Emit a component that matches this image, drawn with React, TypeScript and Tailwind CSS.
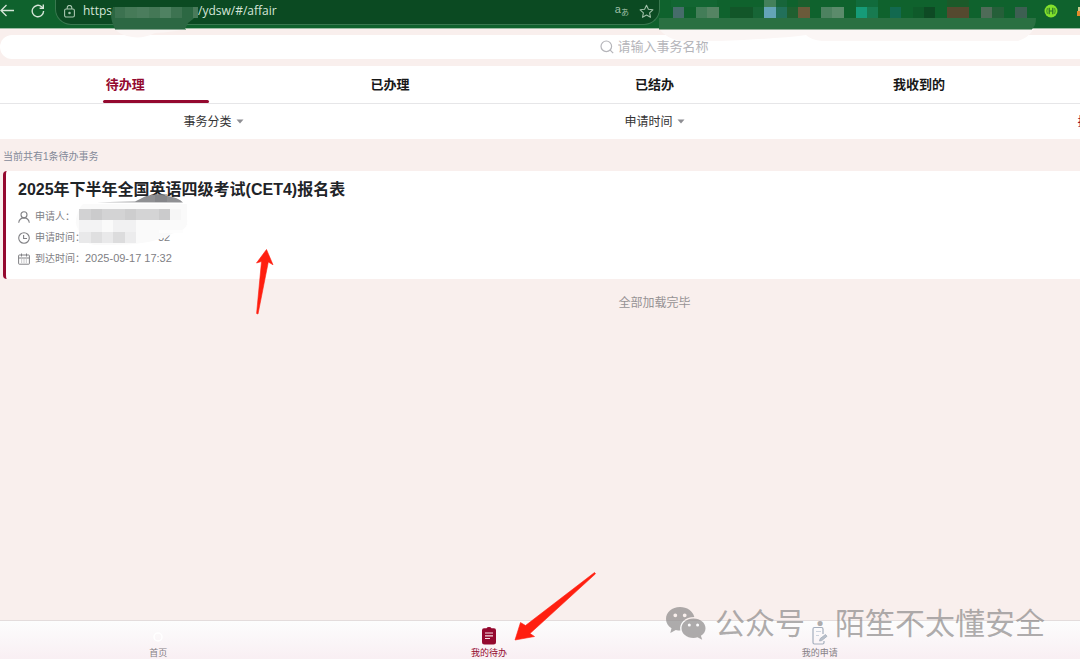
import React from "react";

type Cell = [x: number, y: number, w: number, h: number, fill: string];

const extensionCells: Cell[] = [
  [671, 0, 46, 7, "#126632"],
  [730, 7, 23, 11, "#125629"],
  [764, 0, 12, 7, "#43805a"],
  [776, 0, 11, 7, "#17653a"],
  [673, 7, 11, 11, "#466c6a"],
  [696, 7, 11, 11, "#437d58"],
  [707, 7, 12, 11, "#558463"],
  [753, 7, 11, 11, "#176536"],
  [764, 7, 12, 11, "#64a4b7"],
  [776, 7, 11, 11, "#22705a"],
  [787, 7, 11, 11, "#1f6030"],
  [798, 7, 12, 11, "#6b5a3a"],
  [798, 0, 12, 7, "#1b5f2d"],
  [821, 7, 11, 11, "#4d8260"],
  [832, 7, 12, 11, "#5b8b6b"],
  [856, 7, 11, 11, "#169b78"],
  [856, 0, 22, 7, "#116b3c"],
  [867, 7, 11, 11, "#187a50"],
  [890, 7, 11, 11, "#12694f"],
  [913, 7, 11, 11, "#0f5a2a"],
  [924, 7, 11, 11, "#0e4a24"],
  [947, 7, 22, 11, "#55492f"],
  [947, 0, 22, 7, "#1b5a29"],
  [981, 7, 11, 11, "#4f6b58"],
  [992, 7, 12, 11, "#255f39"],
  [1015, 7, 12, 11, "#3d5f52"],
];

const hostCells: Cell[] = [
  [4, 7, 10, 11, "#3c7250"],
  [14, 7, 12, 11, "#467a58"],
  [26, 7, 12, 11, "#4b7d5d"],
  [38, 7, 11, 11, "#447856"],
  [49, 7, 11, 11, "#4f8262"],
  [60, 7, 11, 11, "#3d7351"],
  [71, 7, 11, 11, "#2c6843"],
  [82, 7, 5, 11, "#4a7b5b"],
];

const nameCells: Cell[] = [
  [6, 15, 12, 11, "#d2d2d3"],
  [18, 15, 11, 11, "#cbcbcc"],
  [29, 15, 23, 11, "#d3d3d4"],
  [52, 15, 11, 11, "#cdcdce"],
  [63, 15, 23, 11, "#d4d4d5"],
  [86, 15, 11, 11, "#cbcbcc"],
  [97, 15, 11, 11, "#f6f6f6"],
  [6, 26, 23, 12, "#f3f3f4"],
  [40, 26, 23, 12, "#f1f1f2"],
  [6, 38, 12, 11, "#e9e9ea"],
  [18, 38, 11, 11, "#dfdfe0"],
  [29, 38, 11, 11, "#e9e9ea"],
  [40, 38, 12, 11, "#dcdcdd"],
  [52, 38, 11, 11, "#ececed"],
];

function Cells({ cells }: { cells: Cell[] }) {
  return (
    <g shapeRendering="crispEdges">
      {cells.map(([x, y, w, h, fill]) => (
        <rect key={`${x}-${y}`} x={x} y={y} width={w} height={h} fill={fill} />
      ))}
    </g>
  );
}

function BrowserBar() {
  return (
    <header className="relative z-10 flex h-[29px] shrink-0 items-start border-b border-[#9dbda5] bg-[#0f622d] text-[#d5e5d8]">
      <button type="button" aria-label="Back" className="flex h-[22px] w-5 items-center">
        <svg width="15" height="14" viewBox="0 0 15 14" fill="none" stroke="currentColor" strokeWidth="1.3">
          <path d="M14 6.5H1M6.5 1 1 6.5 6.5 12" />
        </svg>
      </button>
      <button type="button" aria-label="Reload" className="ml-2 flex h-[22px] w-5 items-center justify-center">
        <svg width="14" height="14" viewBox="0 0 14 14" fill="none" stroke="currentColor" strokeWidth="1.4">
          <path d="M12.6 7A5.7 5.7 0 1 1 10.6 2.7L12.2 4.2" />
          <path d="M12.3.6v3.7H8.6" />
        </svg>
      </button>
      <div className="ml-[7px] flex h-[25px] w-[56%] items-start rounded-b-2xl border border-t-0 border-[#39784f] bg-[#0b4a22] pr-1 pl-2">
        <div className="flex h-[22px] flex-1 items-center text-xs leading-5">
          <svg width="11" height="13" viewBox="0 0 11 13" fill="none" stroke="#a9c6b0" strokeWidth="1.1" className="mr-2 shrink-0">
            <rect x=".6" y="4" width="9.8" height="8" rx="1.5" />
            <path d="M3.2 4V2.7a2.3 2.3 0 0 1 4.6 0V4" />
            <circle cx="5.5" cy="8" r=".7" fill="#a9c6b0" />
          </svg>
          <span className="w-[115px]">https</span>
          <span>/ydsw/#/affair</span>
        </div>
        <button
          type="button"
          aria-label="Translate"
          className="flex h-[22px] w-5 items-center font-['Liberation_Sans','Noto_Sans_CJK_JP',sans-serif] text-[#9fc0a7]"
        >
          <span className="pb-1 text-[11px] leading-4">a</span>
          <span className="pt-1 text-[8px] leading-4">あ</span>
        </button>
        <button type="button" aria-label="Favorite" className="ml-1 flex h-[22px] w-4 items-center justify-center">
          <svg width="15" height="15" viewBox="0 0 15 15" fill="none" stroke="#9fc0a7" strokeWidth="1.1" strokeLinejoin="round">
            <path d="m7.5 1.2 1.9 4.1 4.5.5-3.3 3 .9 4.5-4-2.2-4 2.2.9-4.5-3.3-3 4.5-.5z" />
          </svg>
        </button>
      </div>
      <div className="flex h-[22px] flex-1 items-center justify-end">
        <svg width="14" height="14" viewBox="0 0 14 14" className="mr-[19px]">
          <circle cx="7" cy="7" r="6.5" fill="#83e02c" />
          <path d="M5.2 3.7v6.6M8.8 3.7v6.6M5.2 7h3.6" stroke="#23702b" strokeWidth="1.2" fill="none" />
          <path d="M3.4 4.2Q2.2 7 3.4 9.8M10.6 4.2Q11.8 7 10.6 9.8" stroke="#23702b" strokeWidth=".8" fill="none" />
        </svg>
        <svg width="3" height="12" viewBox="0 0 3 12">
          <path d="M1 2h2v4H1z" fill="#c9c98b" />
          <path d="M0 6h3v5H0z" fill="#e38b2c" />
        </svg>
      </div>
      <svg className="pointer-events-none absolute top-0 left-[111px]" width="90" height="40" viewBox="0 0 90 40">
        <path d="M4 29h70q-12 3-30 4-14 7-28 3-8-2-12-7z" fill="#fbf5f4" />
        <path d="M2 7h85q1 9-10 16l-3 6H4q-4-8-4-14z" fill="#2c6843" />
        <Cells cells={hostCells} />
        <path d="M4 29.500h71" stroke="#86a892" />
      </svg>
      <svg className="pointer-events-none absolute top-0 left-0" width="1040" height="42" viewBox="0 0 1040 42">
        <path d="M659 29h375q-6 9-16 12H822q-11-1-16-6-30 4-86 6H680q-14-3-21-12z" fill="#fbf6f5" />
        <path d="M659 18h377q0 8-4 11H659z" fill="#2a7042" />
        <path d="M659 29.500h373" stroke="#92b19a" />
        <Cells cells={extensionCells} />
      </svg>
    </header>
  );
}

const tabs = ["待办理", "已办理", "已结办", "我收到的"];

function Tabs() {
  return (
    <nav className="grid h-[38px] grid-cols-5 border-b border-[#e6e6e8] bg-white">
      {tabs.map((name, i) => (
        <button
          key={name}
          type="button"
          className={
            i === 0
              ? "relative text-[13px] font-bold text-[#94092f]"
              : "relative text-[13px] font-bold text-[#181818]"
          }
        >
          {name}
          {i === 0 && <span className="absolute bottom-0 left-[110px] h-[3px] w-2/5 rounded-full bg-[#94092f]" />}
        </button>
      ))}
    </nav>
  );
}

function Filters() {
  return (
    <div className="grid h-[35px] grid-cols-3 bg-white text-xs text-[#333]">
      {["事务分类", "申请时间", "排序"].map((name, i) => (
        <button
          key={name}
          type="button"
          aria-haspopup="listbox"
          className={i === 2 ? "flex items-center justify-center gap-1 text-[#94092f]" : "flex items-center justify-center gap-1"}
        >
          {name}
          <svg width="8" height="5" viewBox="0 0 8 5">
            <path d="M.5.500h7L4 4.500z" fill="#8e8e93" />
          </svg>
        </button>
      ))}
    </div>
  );
}

function UserIcon() {
  return (
    <svg width="12" height="12" viewBox="0 0 12 12" fill="none" stroke="currentColor" strokeWidth="1.1">
      <circle cx="6" cy="3.700" r="3" />
      <path d="M.7 11.700Q1.300 7 6 6.900q4.700.1 5.300 4.800" />
    </svg>
  );
}

function ClockIcon() {
  return (
    <svg width="12" height="12" viewBox="0 0 12 12" fill="none" stroke="currentColor" strokeWidth="1.1">
      <circle cx="6" cy="6" r="5.300" />
      <path d="M5.600 3v3.500H9" />
    </svg>
  );
}

function CalendarIcon() {
  return (
    <svg width="12" height="12" viewBox="0 0 12 12" fill="none" stroke="currentColor" strokeWidth="1">
      <rect x=".6" y="2" width="10.800" height="9.200" rx=".6" />
      <path d="M.6 5h10.800M3.500.5v3M8.500.5v3" />
      <path d="M3 7h1.200M5.400 7h1.200M7.800 7H9M3 9h1.200M5.400 9h1.200M7.800 9H9" strokeWidth=".7" />
    </svg>
  );
}

function AffairCard() {
  return (
    <article className="relative ml-[10px] h-[108px] rounded-l-sm border-l-[3px] border-[#94092f] bg-white pt-2 pl-3">
      <h2 className="text-base leading-[22px] font-bold text-[#1f2428]">2025年下半年全国英语四级考试(CET4)报名表</h2>
      <ul className="mt-[5px] text-[10px] leading-[21px] text-[#808084]">
        <li className="flex items-center gap-[5px]">
          <UserIcon />
          <span>申请人：</span>
        </li>
        <li className="flex items-center gap-[5px]">
          <ClockIcon />
          <span>申请时间：</span>
          <span className="ml-[68px] text-[11px]">32</span>
        </li>
        <li className="flex items-center gap-[5px]">
          <CalendarIcon />
          <span className="flex">
            到达时间：<time className="text-[11px]">2025-09-17 17:32</time>
          </span>
        </li>
      </ul>
      <svg className="pointer-events-none absolute top-[21px] left-[68px]" width="120" height="60" viewBox="0 0 120 60">
        <g transform="translate(1 2)">
          <path d="M22 8.200 66 6q12-4 24-4 14 1 21 7v4H22z" fill="#fff" />
          <path d="M22 8.200 60 7.400l10-5q10-3 20-1 14 2 18 7z" fill="#8f9093" />
          <path d="M80 0h12v8H80z" fill="#7f8083" opacity=".6" />
          <path d="M8 10h104v15q2 10-10 13-4 1-9 4-20 9-58 9H20Q8 50 5 38 0 32 1 25q2-10 7-15z" fill="#fafafa" />
          <path d="M84 36h24v3H84z" fill="#fdfdfd" />
          <g transform="translate(-2 0)">
            <Cells cells={nameCells} />
          </g>
        </g>
      </svg>
      <svg className="pointer-events-none absolute top-[78px] left-[250px]" width="18" height="66" viewBox="0 0 18 66">
        <path d="m10.500.5-10 13.500 5-1.500L.6 64.500l1.400.5L12.300 13l4.700 2.800z" fill="#ff1f10" stroke="#ff1f10" strokeWidth=".6" />
      </svg>
    </article>
  );
}

function BottomNav() {
  return (
    <nav className="relative mb-[6px] grid h-[39px] shrink-0 grid-cols-4 border-t border-[#e3dcdc] bg-linear-to-b from-[#fcfdfd] to-[#f9eff3] text-[9px] leading-3 text-[#858085]">
      <a href="#/home" className="flex flex-col items-center justify-end">
        <svg width="16" height="20" viewBox="0 0 16 20" fill="none" stroke="#fff" strokeWidth="1.5">
          <circle cx="8" cy="10" r="4" />
        </svg>
        <span>首页</span>
      </a>
      <a href="#/affair" className="relative flex flex-col items-center justify-end gap-px text-[#94092f]">
        <svg width="16" height="20" viewBox="0 0 16 20">
          <path d="M3 2.300h2.500Q6 1 8 1t2.500 1.300H13q2 0 2 2V16q0 2.500-2.500 2.500h-9Q1 18.500 1 16V4.300q0-2 2-2z" fill="#94092f" />
          <path d="M4 7h8M4 9.800h8M4 12.500h5" stroke="#f5dfe5" strokeWidth="1.200" />
        </svg>
        <span>我的待办</span>
        <svg className="pointer-events-none absolute bottom-[18px] left-[190px]" width="84" height="70" viewBox="0 0 84 70">
          <path
            d="M1 69 6.500 51.500l5 3L80.500 1.500l1 1.300L16 62.500l4.500 3z"
            fill="#ff1f10"
            stroke="#ff1f10"
            strokeWidth=".6"
          />
        </svg>
      </a>
      <a href="#/apply" className="flex flex-col items-center justify-end gap-px">
        <svg width="16" height="20" viewBox="0 0 16 20" fill="none" stroke="#a4aebd" strokeWidth="1.200">
          <path d="M11 8V3q0-1.500-1.500-1.500h-7Q1 1.500 1 3v13.500Q1 18 2.500 18h8q1.500 0 1.500-1.500V15" />
          <path d="M4 5.500h5M4 9.500h3" stroke="#cdd4de" />
          <path d="m7.500 15 .7-2.500 5.300-4 1.500 1.800-5.200 4.200z" fill="#b9c0ca" strokeWidth=".8" />
        </svg>
        <span>我的申请</span>
      </a>
    </nav>
  );
}

function Watermark() {
  return (
    <div className="pointer-events-none absolute right-[35px] bottom-[20px] flex items-center text-[30px] leading-[44px] text-[#8b8989]/70">
      <svg width="42" height="34" viewBox="0 0 42 34" className="mr-2" fill="currentColor">
        <path
          fillRule="evenodd"
          d="M15 1C7 1 1 6 1 13c0 4 2 7 5.500 9.200L5.300 27l5.500-3q2.200.6 4.500.600C14 17 20 11 29.300 11 28 5 22 1 15 1zm-4.700 6.400a1.900 1.900 0 1 1 0 3.800 1.900 1.900 0 0 1 0-3.800zm9.400 0a1.900 1.900 0 1 1 0 3.800 1.900 1.900 0 0 1 0-3.800z"
        />
        <path
          fillRule="evenodd"
          d="M28.500 12.500C21.500 12.500 16.500 17 16.500 22.300S21.500 32 28.500 32q2 0 4-.7l4.700 2.500-1.300-4.100C39 28 40.500 25.300 40.500 22.300c0-5.300-5-9.800-12-9.800zm-4.200 5a1.500 1.500 0 1 1 0 3 1.500 1.500 0 0 1 0-3zm8.300 0a1.500 1.500 0 1 1 0 3 1.500 1.500 0 0 1 0-3z"
        />
      </svg>
      <span>公众号</span>
      <span className="w-[30px] text-center font-bold">·</span>
      <span>陌笙不太懂安全</span>
    </div>
  );
}

export default function App() {
  return (
    <div className="relative flex min-h-screen flex-col overflow-hidden bg-white font-['Open_Sans','Noto_Sans_CJK_SC',sans-serif]">
      <BrowserBar />
      <div className="-ml-[7px] flex w-[122.5%] flex-1 flex-col font-['Liberation_Sans','Noto_Sans_CJK_SC',sans-serif]">
        <main className="flex-1 bg-[#f9efed]">
          <div className="pt-[6px] pb-[7px] pl-[7px]">
            <label className="flex h-6 items-center justify-center gap-1 rounded-full bg-white pr-[7px] text-[#b5b5ba]">
              <svg width="14" height="14" viewBox="0 0 14 14" fill="none" stroke="currentColor" strokeWidth="1.200" aria-hidden="true">
                <circle cx="6.300" cy="6.300" r="5.300" />
                <path d="m10.200 10.200 3 3" />
              </svg>
              <input
                type="text"
                aria-label="请输入事务名称"
                placeholder="请输入事务名称"
                className="w-[92px] bg-transparent text-[13px] leading-5 outline-none placeholder:text-[#b5b5ba]"
              />
            </label>
          </div>
          <Tabs />
          <Filters />
          <p className="pt-[10px] pb-[6px] pl-[10px] text-[10px] leading-4 text-[#848a99]">当前共有1条待办事务</p>
          <AffairCard />
          <p className="pt-[14px] text-center text-xs leading-5 text-[#969294]">全部加载完毕</p>
        </main>
        <BottomNav />
      </div>
      <Watermark />
    </div>
  );
}
